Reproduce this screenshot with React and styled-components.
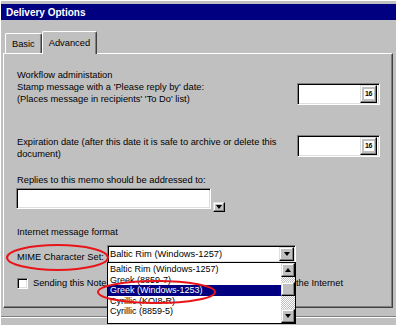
import styled, { createGlobalStyle } from 'styled-components';

const GlobalStyle = createGlobalStyle`
  body {
    margin: 0;
    background: #c0c0c0;
    font-family: "Liberation Sans", Arial, sans-serif;
  }
`;

const charsets = [
  'Baltic Rim (Windows-1257)',
  'Greek (8859-7)',
  'Greek (Windows-1253)',
  'Cyrillic (KOI8-R)',
  'Cyrillic (8859-5)',
];

const DeliveryOptions = () => {
  return (
    <Window>
      <TitleBar>Delivery Options</TitleBar>
      <TabStrip>
        <Tab>Basic</Tab>
        <Tab $active>Advanced</Tab>
      </TabStrip>
      <Panel>
        <Text>Workflow administation</Text>
        <Row>
          <Text>
            Stamp message with a 'Please reply by' date:
            <br />
            (Places message in recipients' 'To Do' list)
          </Text>
          <DateField $top={2}>
            <CalButton>
              <CalFace>16</CalFace>
            </CalButton>
          </DateField>
        </Row>
        <Row $top={30}>
          <Text $pad={1}>
            Expiration date (after this date it is safe to archive or delete this
            <br />
            document)
          </Text>
          <DateField>
            <CalButton>
              <CalFace>16</CalFace>
            </CalButton>
          </DateField>
        </Row>
        <Text $top={14}>Replies to this memo should be addressed to:</Text>
        <FieldRow>
          <TextField />
          <SmallButton>
            <Arrow />
          </SmallButton>
        </FieldRow>
        <Text $top={17}>Internet message format</Text>
        <MimeRow>
          <MimeLabel>MIME Character Set:</MimeLabel>
          <Combo>
            <ComboText>Baltic Rim (Windows-1257)</ComboText>
            <ComboButton>
              <Arrow />
            </ComboButton>
            <DropList>
              <Items>
                {charsets.map((name, index) => (
                  <Item key={index} $selected={index === 2}>
                    {name}
                  </Item>
                ))}
              </Items>
              <ScrollBar>
                <ScrollButton>
                  <Arrow $up />
                </ScrollButton>
                <Thumb />
                <ScrollButton>
                  <Arrow />
                </ScrollButton>
              </ScrollBar>
            </DropList>
          </Combo>
        </MimeRow>
        <CheckRow>
          <CheckBox />
          <Text>Sending this Note converts it into MIME format for recipients on the Internet</Text>
        </CheckRow>
      </Panel>
      <Divider />
      <Marks viewBox="0 0 396 325" width="396" height="325">
        <ellipse cx="57.5" cy="257.5" rx="50.5" ry="12.5" />
        <ellipse cx="156.5" cy="292" rx="58.5" ry="11" />
      </Marks>
    </Window>
  );
};

const Window = styled.div`
  position: relative;
  width: 396px;
  height: 325px;
  box-sizing: border-box;
  padding-top: 3px;
  border-top: 1px solid #ffffff;
  border-left: 1px solid #ffffff;
  background: #c0c0c0;
  overflow: hidden;
  font-size: 9.3px;
  color: #000;
`;

const TitleBar = styled.div`
  height: 16px;
  display: flex;
  align-items: center;
  padding-left: 5px;
  background: #000080;
  color: #ffffff;
  font-size: 10px;
  font-weight: bold;
`;

const TabStrip = styled.div`
  position: relative;
  z-index: 1;
  height: 33px;
  display: flex;
  align-items: flex-end;
  padding-left: 4px;
`;

const Tab = styled.div`
  box-sizing: border-box;
  height: ${(p) => (p.$active ? 23 : 20)}px;
  margin-bottom: ${(p) => (p.$active ? -1 : 0)}px;
  padding: ${(p) => (p.$active ? '0 6px 1px' : '1px 6px 0')};
  display: flex;
  align-items: center;
  background: #c0c0c0;
  border-top: 1px solid #ffffff;
  border-left: 1px solid #ffffff;
  border-right: 1px solid #404040;
  box-shadow: inset -1px 0 #808080;
  border-radius: 2px 2px 0 0;
`;

const Panel = styled.div`
  margin-left: 2px;
  width: 390px;
  height: 255px;
  box-sizing: border-box;
  padding: 15px 12px 0 13px;
  border-top: 1px solid #ffffff;
  border-left: 1px solid #ffffff;
  border-right: 1px solid #404040;
  border-bottom: 1px solid #404040;
  box-shadow: inset -1px -1px #808080;
`;

const Text = styled.div`
  line-height: 12px;
  white-space: nowrap;
  margin-top: ${(p) => p.$top || 0}px;
  padding-top: ${(p) => p.$pad || 0}px;
`;

const Row = styled.div`
  display: flex;
  justify-content: space-between;
  align-items: flex-start;
  margin-top: ${(p) => p.$top || 0}px;
`;

const sunken = `
  box-sizing: border-box;
  background: #ffffff;
  border: 1px solid;
  border-color: #808080 #ffffff #ffffff #808080;
  box-shadow: inset 1px 1px #000000, inset -1px -1px #dfdfdf;
`;

const raised = `
  box-sizing: border-box;
  background: #c0c0c0;
  border: 1px solid;
  border-color: #dfdfdf #000000 #000000 #dfdfdf;
  box-shadow: inset -1px -1px #808080, inset 1px 1px #ffffff;
`;

const DateField = styled.div`
  ${sunken}
  width: 83px;
  height: 22px;
  margin-top: ${(p) => p.$top || 0}px;
  display: flex;
  justify-content: flex-end;
  align-items: center;
  padding-right: 2px;
`;

const CalButton = styled.div`
  ${raised}
  width: 17px;
  height: 18px;
  display: flex;
  align-items: center;
  justify-content: center;
`;

const CalFace = styled.span`
  width: 10px;
  height: 10px;
  background: #ffffff;
  font-size: 7px;
  font-weight: bold;
  line-height: 10px;
  text-align: center;
  letter-spacing: -0.3px;
`;

const FieldRow = styled.div`
  display: flex;
  align-items: flex-end;
  margin-top: 2px;
  margin-left: -1px;
`;

const TextField = styled.div`
  ${sunken}
  width: 195px;
  height: 21px;
`;

const SmallButton = styled.div`
  ${raised}
  width: 12px;
  height: 10px;
  margin: 0 0 -3px 2px;
  display: flex;
  align-items: center;
  justify-content: center;
`;

const Arrow = styled.span`
  width: 0;
  height: 0;
  border-left: 3.5px solid transparent;
  border-right: 3.5px solid transparent;
  ${(p) => (p.$up ? 'border-bottom: 4px solid #000;' : 'border-top: 4px solid #000;')}
`;

const MimeRow = styled.div`
  display: flex;
  align-items: flex-end;
  margin-top: 7px;
`;

const MimeLabel = styled.div`
  width: 90px;
  line-height: 12px;
  white-space: nowrap;
`;

const Combo = styled.div`
  ${sunken}
  position: relative;
  width: 189px;
  height: 18px;
  display: flex;
  align-items: center;
  justify-content: space-between;
  padding: 0 1px 0 2px;
`;

const ComboText = styled.span`
  white-space: nowrap;
`;

const ComboButton = styled.div`
  ${raised}
  width: 15px;
  height: 14px;
  display: flex;
  align-items: center;
  justify-content: center;
`;

const DropList = styled.div`
  position: absolute;
  z-index: 2;
  top: 100%;
  left: -1px;
  width: 189px;
  height: 62px;
  box-sizing: border-box;
  display: flex;
  background: #ffffff;
  border: 1px solid #000000;
`;

const Items = styled.div`
  flex: 1;
  padding-top: 1px;
`;

const Item = styled.div`
  height: 10.6px;
  line-height: 10.6px;
  font-size: 9px;
  padding-left: 2px;
  white-space: nowrap;
  background: ${(p) => (p.$selected ? '#000080' : 'transparent')};
  color: ${(p) => (p.$selected ? '#ffffff' : '#000000')};
`;

const ScrollBar = styled.div`
  width: 14px;
  display: flex;
  flex-direction: column;
  background: repeating-conic-gradient(#c0c0c0 0 25%, #ffffff 0 50%) 0 0 / 2px 2px;
`;

const ScrollButton = styled.div`
  ${raised}
  width: 14px;
  height: 14px;
  display: flex;
  align-items: center;
  justify-content: center;
  &:last-child {
    margin-top: auto;
  }
`;

const Thumb = styled.div`
  ${raised}
  width: 14px;
  height: 14px;
  margin-top: 5px;
`;

const CheckRow = styled.div`
  display: flex;
  align-items: center;
  gap: 5px;
  margin-top: 14px;
`;

const CheckBox = styled.div`
  ${sunken}
  width: 11px;
  height: 11px;
`;

const Divider = styled.div`
  margin-top: 8px;
  border-top: 1px solid #808080;
  border-bottom: 1px solid #ffffff;
`;

const Marks = styled.svg`
  position: absolute;
  z-index: 3;
  top: -1px;
  left: -1px;
  pointer-events: none;
  fill: none;
  stroke: #e8141a;
  stroke-width: 2;
`;

export default function App() {
  return (
    <>
      <GlobalStyle />
      <DeliveryOptions />
    </>
  );
}
